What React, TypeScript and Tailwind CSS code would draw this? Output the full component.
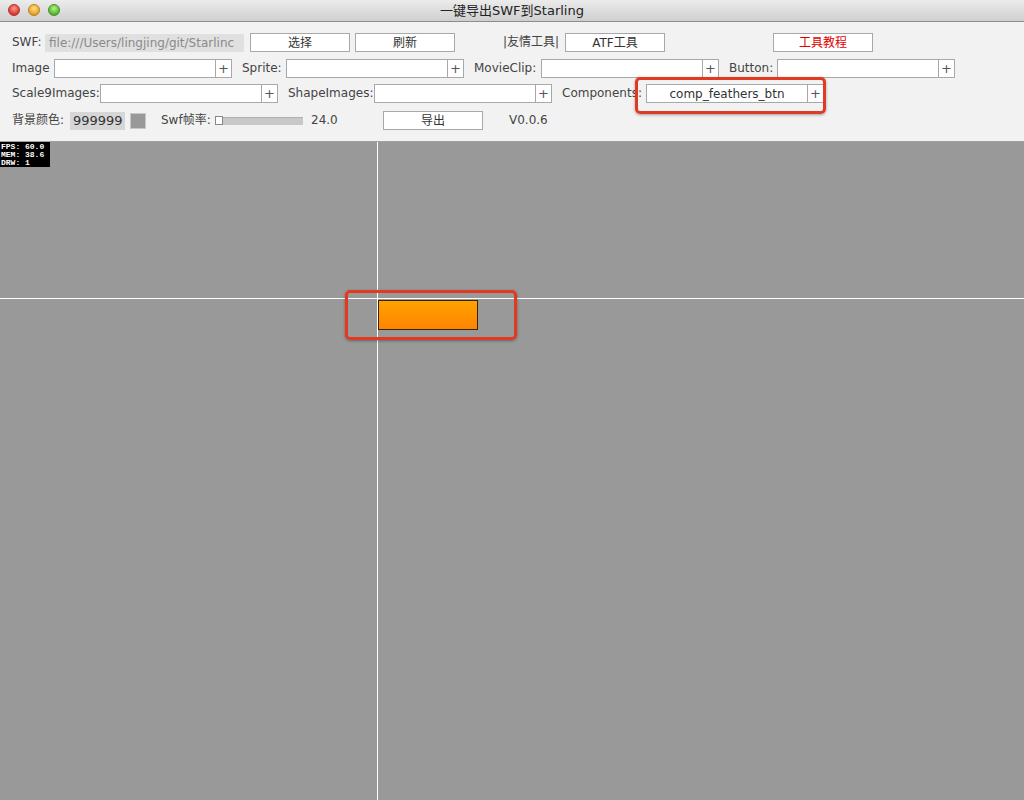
import React from "react";

const font = { fontFamily: '"Lucida Grande", "DejaVu Sans", "Noto Sans CJK SC", sans-serif' };

function Btn({ label, w = "w-[100px]", red = false }: { label: string; w?: string; red?: boolean }) {
  return (
    <div
      className={`${w} h-[19px] shrink-0 border border-[#a8a8a8] bg-white flex items-center justify-center text-[12px] ${
        red ? "text-[#e00000]" : "text-[#333]"
      }`}
    >
      {label}
    </div>
  );
}

function AddField({ value = "" }: { value?: string }) {
  return (
    <div className="flex h-[19px] shrink-0">
      <div className="w-[162px] h-full border border-[#a8a8a8] bg-white flex items-center justify-center text-[12px] text-[#333]">
        {value}
      </div>
      <div className="w-[16px] h-full border border-l-0 border-[#a8a8a8] bg-white flex items-center justify-center text-[13px] text-[#555]">
        +
      </div>
    </div>
  );
}

function Label({ text, w, ml = "" }: { text: string; w: string; ml?: string }) {
  return <div className={`${w} ${ml} shrink-0 text-[12px] text-[#444] leading-[19px] whitespace-nowrap`}>{text}</div>;
}

export default function App() {
  return (
    <div className="w-[1024px] h-[800px] flex flex-col overflow-hidden bg-[#999999]" style={font}>
      {/* title bar */}
      <div className="relative h-[22px] shrink-0 bg-gradient-to-b from-[#ececec] to-[#cfcfcf] border-b border-[#8c8c8c] flex items-center justify-center">
        <div className="absolute left-[8px] top-[4px] flex gap-[8px]">
          <span className="w-[12px] h-[12px] rounded-full bg-[radial-gradient(circle_at_50%_35%,#ff9a8a,#e0443a_60%,#b5281f)] border border-[#a33]" />
          <span className="w-[12px] h-[12px] rounded-full bg-[radial-gradient(circle_at_50%_35%,#ffe08a,#f0a830_60%,#c07a10)] border border-[#b8821a]" />
          <span className="w-[12px] h-[12px] rounded-full bg-[radial-gradient(circle_at_50%_35%,#b8f08a,#5ec03a_60%,#3a8a1f)] border border-[#4a8a2a]" />
        </div>
        <span className="text-[13px] text-[#222]">一键导出SWF到Starling</span>
      </div>

      {/* control panel */}
      <div className="relative h-[120px] shrink-0 bg-[#f2f2f2] border-b border-[#a0a0a0] pl-[12px] pt-[11px]">
        {/* row 1 */}
        <div className="flex items-center h-[19px]">
          <Label text="SWF:" w="w-[33px]" />
          <div className="w-[199px] h-[18px] shrink-0 bg-[#e0e0e0] text-[12px] text-[#8a8a8a] leading-[18px] pl-[4px] overflow-hidden whitespace-nowrap">
            file:///Users/lingjing/git/Starlinc
          </div>
          <div className="ml-[6px]"><Btn label="选择" /></div>
          <div className="ml-[5px]"><Btn label="刷新" /></div>
          <Label text="|友情工具|" w="w-[62px]" ml="ml-[48px]" />
          <Btn label="ATF工具" />
          <div className="ml-[108px]"><Btn label="工具教程" red /></div>
        </div>

        {/* row 2 */}
        <div className="flex items-center h-[19px] mt-[7px]">
          <Label text="Image" w="w-[42px]" />
          <AddField />
          <Label text="Sprite:" w="w-[44px]" ml="ml-[10px]" />
          <AddField />
          <Label text="MovieClip:" w="w-[67px]" ml="ml-[10px]" />
          <AddField />
          <Label text="Button:" w="w-[48px]" ml="ml-[10px]" />
          <AddField />
        </div>

        {/* row 3 */}
        <div className="flex items-center h-[19px] mt-[6px]">
          <Label text="Scale9Images:" w="w-[88px]" />
          <AddField />
          <Label text="ShapeImages:" w="w-[86px]" ml="ml-[10px]" />
          <AddField />
          <Label text="Components:" w="w-[84px]" ml="ml-[10px]" />
          <AddField value="comp_feathers_btn" />
        </div>

        {/* row 4 */}
        <div className="flex items-center h-[19px] mt-[8px]">
          <Label text="背景颜色:" w="w-[58px]" />
          <div className="w-[55px] h-[18px] shrink-0 bg-[#d6d6d6] text-[13px] text-[#333] leading-[18px] pl-[3px]">999999</div>
          <div className="w-[16px] h-[16px] ml-[5px] shrink-0 bg-[#999999] border border-[#c8c8c8]" />
          <Label text="Swf帧率:" w="w-[54px]" ml="ml-[15px]" />
          <div className="relative w-[88px] h-[8px] shrink-0 bg-[#c8c8c8] border-t border-[#b0b0b0]">
            <div className="absolute left-0 top-[-2px] w-[8px] h-[9px] bg-white border border-[#888]" />
          </div>
          <Label text="24.0" w="w-[72px]" ml="ml-[8px]" />
          <Btn label="导出" />
          <Label text="V0.0.6" w="w-[60px]" ml="ml-[26px]" />
        </div>

        {/* highlight around components field */}
        <div className="absolute left-[635px] top-[55px] w-[191px] h-[37px] rounded-[5px] border-[3px] border-[#e23a22] shadow-[0_1px_3px_rgba(0,0,0,0.35)]" />
      </div>

      {/* stage */}
      <div className="relative flex-1 bg-[#999999]">
        <div className="absolute left-0 top-0 w-[50px] h-[25px] bg-black text-white font-mono text-[8px] font-bold leading-[8px] pl-[1px] pt-[1px]">
          <div>FPS: 60.0</div>
          <div>MEM: 38.6</div>
          <div>DRW: 1</div>
        </div>
        <div className="absolute left-[377px] top-0 bottom-0 w-px bg-white" />
        <div className="absolute left-0 right-0 top-[156px] h-px bg-white" />
        <div className="absolute left-[378px] top-[158px] w-[100px] h-[30px] border border-[#3a2200] bg-gradient-to-b from-[#ffa200] to-[#ff8400]" />
        <div className="absolute left-[345px] top-[148px] w-[172px] h-[50px] rounded-[5px] border-[3px] border-[#e23a22] shadow-[0_1px_3px_rgba(0,0,0,0.35)]" />
      </div>
    </div>
  );
}
